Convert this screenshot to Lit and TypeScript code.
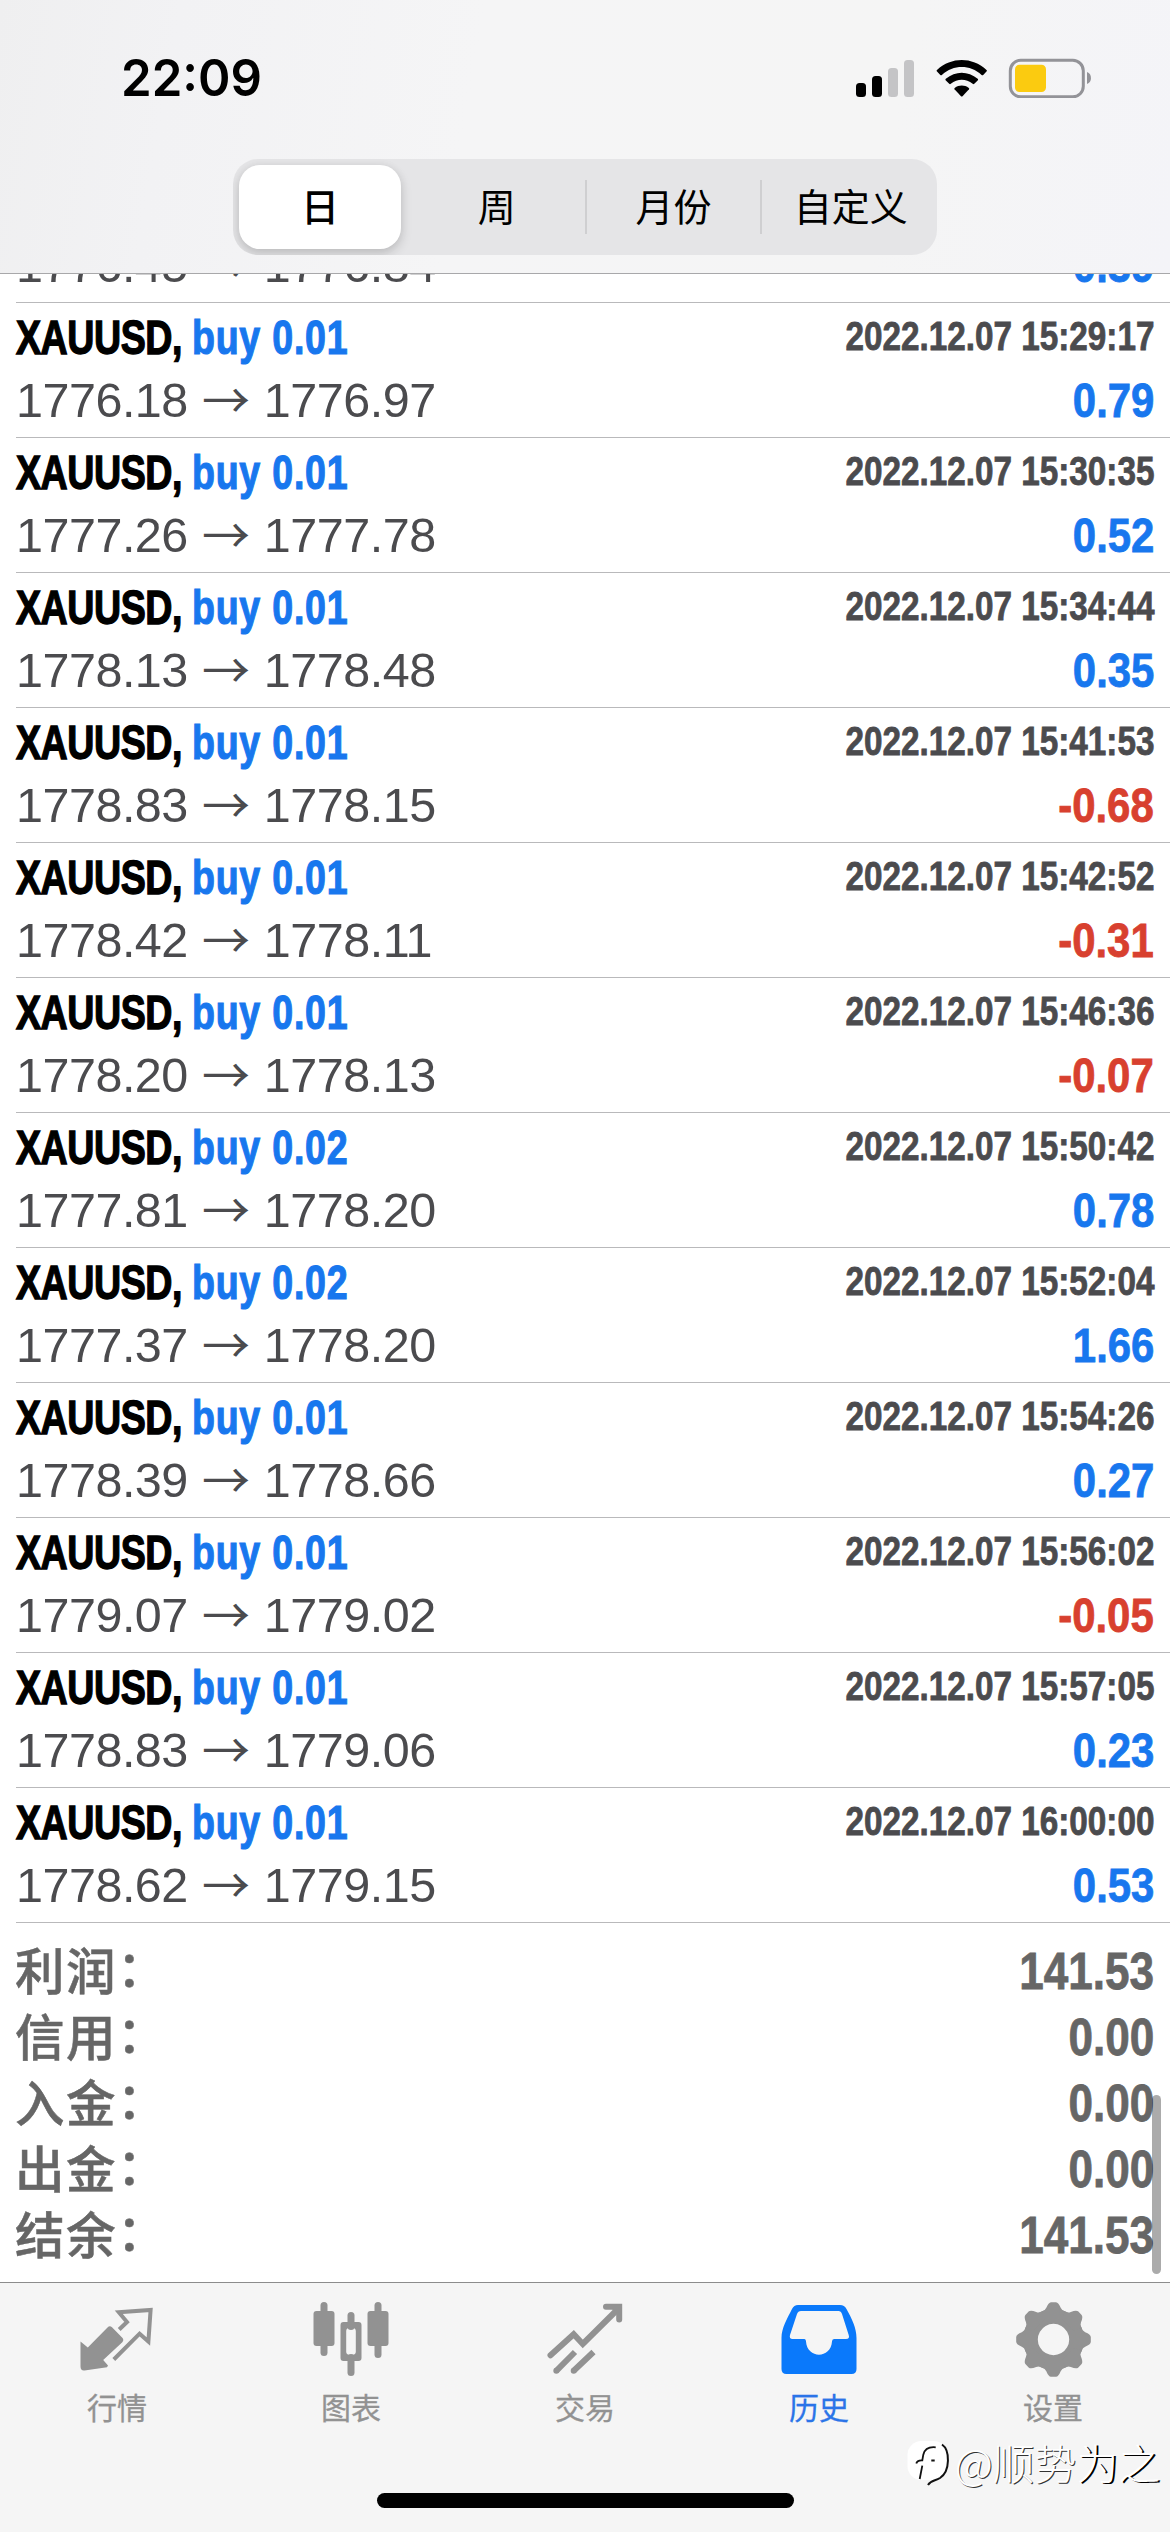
import { LitElement, html, svg, css, nothing } from "lit";
import { customElement, property } from "lit/decorators.js";

type Deal = { lot: string; open: string; close: string; time: string; profit: string };

/* The deal that is scrolled halfway under the header: only its price line is in view. */
const CLIPPED: Deal = { lot: "", open: "1776.45", close: "1776.84", time: "", profit: "0.39" };

const DEALS: Deal[] = [
  { lot: "0.01", open: "1776.18", close: "1776.97", time: "2022.12.07 15:29:17", profit: "0.79" },
  { lot: "0.01", open: "1777.26", close: "1777.78", time: "2022.12.07 15:30:35", profit: "0.52" },
  { lot: "0.01", open: "1778.13", close: "1778.48", time: "2022.12.07 15:34:44", profit: "0.35" },
  { lot: "0.01", open: "1778.83", close: "1778.15", time: "2022.12.07 15:41:53", profit: "-0.68" },
  { lot: "0.01", open: "1778.42", close: "1778.11", time: "2022.12.07 15:42:52", profit: "-0.31" },
  { lot: "0.01", open: "1778.20", close: "1778.13", time: "2022.12.07 15:46:36", profit: "-0.07" },
  { lot: "0.02", open: "1777.81", close: "1778.20", time: "2022.12.07 15:50:42", profit: "0.78" },
  { lot: "0.02", open: "1777.37", close: "1778.20", time: "2022.12.07 15:52:04", profit: "1.66" },
  { lot: "0.01", open: "1778.39", close: "1778.66", time: "2022.12.07 15:54:26", profit: "0.27" },
  { lot: "0.01", open: "1779.07", close: "1779.02", time: "2022.12.07 15:56:02", profit: "-0.05" },
  { lot: "0.01", open: "1778.83", close: "1779.06", time: "2022.12.07 15:57:05", profit: "0.23" },
  { lot: "0.01", open: "1778.62", close: "1779.15", time: "2022.12.07 16:00:00", profit: "0.53" },
];

const TOTALS: [string, string][] = [
  ["利润", "141.53"],
  ["信用", "0.00"],
  ["入金", "0.00"],
  ["出金", "0.00"],
  ["结余", "141.53"],
];

@customElement("status-bar")
class StatusBar extends LitElement {
  static styles = css`
    :host { display: flex; justify-content: space-between; align-items: center; height: 156px; padding: 0 78px 0 121px; box-sizing: border-box; }
    .clock { font: 600 51px/60px Inter, "Liberation Sans", sans-serif; color: #000; transform: scaleX(0.965); transform-origin: left; }
    .icons { display: block; width: 237px; height: 40px; }
  `;
  render() {
    return html`
      <div class="clock">22:09</div>
      <svg class="icons" viewBox="855 57 237 40">
        <rect x="856" y="82" width="10" height="14" rx="3.5" />
        <rect x="872" y="75" width="10" height="21" rx="3.5" />
        <rect x="888" y="67" width="10" height="29" rx="3.5" fill="#c4c4c6" />
        <rect x="904" y="59" width="10" height="37" rx="3.5" fill="#c4c4c6" />
        <path d="M936.8 70.3 Q936.2 69.6 937 68.9 C951.5 55.8 972 55.8 986.5 68.9 Q987.3 69.6 986.7 70.3 L983.2 73.9 Q982.4 74.6 981.6 73.9 C970 63.5 953.5 63.5 941.9 73.9 Q941.1 74.6 940.3 73.9 Z" />
        <path d="M945.6 79.2 Q945 78.5 945.8 77.8 C955.5 69.6 968 69.6 977.7 77.8 Q978.5 78.5 977.9 79.2 L974.3 82.8 Q973.5 83.5 972.7 82.8 C966 77.4 957.5 77.4 950.8 82.8 Q950 83.5 949.2 82.8 Z" />
        <path d="M954.5 88.2 Q953.9 87.5 954.7 86.9 C959 83.8 964.5 83.8 968.8 86.9 Q969.6 87.5 969 88.2 L962.5 95.2 Q961.75 96 961 95.2 Z" />
        <rect x="1010.3" y="59.300" width="73" height="36.500" rx="10.5" fill="none" stroke="#939398" stroke-width="3" />
        <path d="M1087 71 C1092.3 72.5 1092.3 81.5 1087 83 Z" fill="#939398" />
        <rect x="1015" y="63.7" width="31" height="27.4" rx="4.500" fill="#fbcb10" />
      </svg>
    `;
  }
}

@customElement("period-switch")
class PeriodSwitch extends LitElement {
  static styles = css`
    :host { display: block; width: 704px; margin: 3px auto 0; }
    .track { display: flex; height: 96px; box-sizing: border-box; border-radius: 25px; background: #e5e5e7; overflow: hidden; }
    .seg { flex: 177 0 0; display: flex; align-items: center; justify-content: center; padding-bottom: 5px; font: 400 38px/50px "Noto Sans CJK SC", sans-serif; color: #000; box-sizing: border-box; }
    .week { padding-right: 1px; }
    .custom { flex-grow: 174; padding-left: 3px; }
    .on { flex: none; width: 162px; height: 84px; margin: 6px 8px 6px 6px; border-radius: 21px; background: #fff; box-shadow: 0 5px 12px rgba(0, 0, 0, 0.16), 0 0 8px rgba(0, 0, 0, 0.05); font-weight: 500; }
    .bar { flex: none; align-self: center; width: 2px; height: 54px; margin: 0 -1px; background: #cfcfd1; }
  `;
  render() {
    return html`<div class="track">
      <div class="seg on">日</div>
      <div class="seg week">周</div>
      <div class="bar"></div>
      <div class="seg">月份</div>
      <div class="bar"></div>
      <div class="seg custom">自定义</div>
    </div>`;
  }
}

@customElement("deal-row")
class DealRow extends LitElement {
  @property({ attribute: false }) deal!: Deal;
  static styles = css`
    :host { display: block; margin-left: 16px; padding: 3px 16px 6px 0; box-sizing: border-box; border-bottom: 1px solid #b9b9bb; font-family: "Liberation Sans", Arial, sans-serif; white-space: nowrap; }
    .line { display: flex; justify-content: space-between; align-items: baseline; height: 62px; line-height: 62px; }
    .head { margin-bottom: 1px; }
    .name { font-size: 49px; font-weight: 700; color: #000; letter-spacing: -0.6px; -webkit-text-stroke: 1.4px; transform: scaleX(0.767); transform-origin: left; }
    .side { color: #1877ee; letter-spacing: 1px; -webkit-text-stroke: 1.2px; }
    .time { font-size: 40px; font-weight: 700; color: #4b4b4e; transform: translateY(-4px) scaleX(0.832); transform-origin: right; -webkit-text-stroke: 0.8px; }
    .prices { display: flex; font-size: 48.5px; letter-spacing: -0.5px; color: #4b4b4e; }
    .arrow { display: flex; width: 76px; justify-content: center; font-family: "Noto Sans CJK SC", sans-serif; font-size: 48px; transform: translateY(-3px); }
    .profit { font-size: 49px; font-weight: 700; transform: scaleX(0.855); transform-origin: right; -webkit-text-stroke: 0.8px; color: #1877ee; }
    .loss { color: #d8402f; }
    :host([clipped]) { padding-top: 0; }
  `;
  render() {
    const d = this.deal;
    return html`
      ${d.time ? html`<div class="line head"><span class="name">XAUUSD, <span class="side">buy ${d.lot}</span></span><span class="time">${d.time}</span></div>` : nothing}
      <div class="line"><span class="prices"><span>${d.open}</span><span class="arrow">→</span><span>${d.close}</span></span><span class="profit ${d.profit.startsWith("-") ? "loss" : ""}">${d.profit}</span></div>
    `;
  }
}

@customElement("totals-list")
class TotalsList extends LitElement {
  static styles = css`
    :host { display: block; padding: 15px 16px 0; }
    .row { display: flex; justify-content: space-between; align-items: flex-start; height: 66px; color: #666; }
    .label { font: 500 49.5px/61px "Noto Sans CJK SC", sans-serif; letter-spacing: 1.5px; margin-left: -1px; -webkit-text-stroke: 0.5px; }
    .value { font: 700 52px/66px "Liberation Sans", Arial, sans-serif; transform: scaleX(0.848); transform-origin: right; -webkit-text-stroke: 0.8px; }
    .colon { position: relative; top: -3px; }
  `;
  render() {
    return TOTALS.map(([k, v]) => html`<div class="row"><span class="label">${k}<span class="colon">：</span></span><span class="value">${v}</span></div>`);
  }
}

const gearTeeth = [0, 45, 90, 135, 180, 225, 270, 315];

const ICONS = {
  quotes: svg`
    <path d="M1.500 39.500 L8.800 45.500 L28.500 25.500 Q30.800 23 33 25.300 L43.300 35.800 Q45.300 38 43.300 40.300 L24.200 58 L29 63.500 L28 65.300 L5.500 68.400 Q1.500 68.800 1.500 64.500 Z" fill="#929292" />
    <path d="M40.200 27.500 L48 20 L39.800 10.300 L71.600 7.900 L69.400 39.500 L60.600 31.700 L34.800 57.500" fill="none" stroke="#929292" stroke-width="4" />`,
  chart: svg`<g fill="#929292">
    <rect x="7.500" y="0" width="7" height="54" rx="3.5" /><rect x="0.500" y="9" width="21" height="35" rx="3" />
    <rect x="34.500" y="10" width="7" height="18" rx="3.5" /><rect x="34.500" y="52" width="7" height="22" rx="3.5" />
    <path fill-rule="evenodd" d="M30.500 20 H45.500 Q48.500 20 48.500 23 V56 Q48.500 59 45.500 59 H30.500 Q27.500 59 27.500 56 V23 Q27.500 20 30.500 20 Z M38 25.500 Q33.200 25.500 33.200 29 V50 Q33.200 53 38 53 Q42.800 53 42.800 50 V29 Q42.800 25.500 38 25.500 Z" />
    <rect x="61.500" y="0" width="7" height="56" rx="3.5" /><rect x="54.500" y="9" width="21" height="35" rx="3" /></g>`,
  trade: svg`<g fill="none" stroke="#929292" stroke-width="6">
    <path d="M3.500 53.300 L26.700 32.300 L35.800 42 L70 8" stroke-linecap="round" />
    <path d="M59 4.800 H72.200 V17.500" stroke-linecap="round" />
    <path d="M28 50 L9.300 68.800 M46.500 50 L26.700 68.800" />
    </g><path d="M62 4 L73 4 L73 15 Z" fill="#929292" /><circle cx="9.300" cy="68.800" r="3" fill="#929292" /><circle cx="26.700" cy="68.800" r="3" fill="#929292" />`,
  history: svg`<path fill="#0a79fb" fill-rule="evenodd" d="M17 3 H59 Q63.500 3 65.500 7 C71 17 75.500 26 75.500 36 V67 Q75.500 72 70.500 72 H5.500 Q0.500 72 0.500 67 V36 C0.500 26 6 17 11 7 Q13 3 17 3 Z M20 9 Q17 9 16 12 L9 33 Q8 37 11.500 37 H23.500 Q25 37 25 39.500 C26 57 50 57 51 39.500 Q51 37 53 37 H65 Q69 37 67.700 33 L61 12 Q60 9 57.500 9 Z" />`,
  settings: svg`<g fill="#929292"><path fill-rule="evenodd" d="M38.500 7 A30.500 30.500 0 1 1 38.490 7 Z M38.500 21.800 A15.700 15.700 0 1 0 38.510 21.800 Z" />
    ${gearTeeth.map((a) => svg`<path transform="rotate(${a} 38.500 37.500)" d="M26.500 9.800 Q30 9 31.300 5.800 Q33.500 0.400 36 0.200 H41 Q43.500 0.400 45.700 5.800 Q47 9 50.500 9.800 L47 17 H30 Z" />`)}</g>`,
};

@customElement("tab-bar")
class TabBar extends LitElement {
  static styles = css`
    :host { display: block; position: relative; height: 250px; box-sizing: border-box; border-top: 1px solid #8c8c8c; background: #f5f5f5; }
    .tabs { display: flex; }
    .tab { flex: 1; display: flex; flex-direction: column; align-items: center; padding-top: 19px; font: 400 30px/40px "Noto Sans CJK SC", sans-serif; color: #929292; -webkit-text-stroke: 0.3px; }
    .on { color: #2b74e8; }
    .icon { display: block; width: 77px; height: 75px; margin-bottom: 9px; }
    .home { width: 417px; height: 15px; border-radius: 8px; background: #000; margin: 67px auto 0; }
    .mark { position: absolute; right: 10px; top: 149px; display: flex; align-items: center; gap: 4px; font: 300 41.8px/60px "Noto Sans CJK SC", sans-serif; color: #fff; text-shadow: 1px 0.5px 0 #333; }
    .logo { display: block; width: 44px; height: 48px; margin-top: 4px; }
    .deep { text-shadow: 2px 1px 0 #000; }
  `;
  render() {
    const tabs: [keyof typeof ICONS, string][] = [
      ["quotes", "行情"],
      ["chart", "图表"],
      ["trade", "交易"],
      ["history", "历史"],
      ["settings", "设置"],
    ];
    return html`
      <div class="tabs">
        ${tabs.map(([id, label]) => html`<div class="tab ${id === "history" ? "on" : ""}"><svg class="icon" viewBox="0 0 77 75">${ICONS[id]}</svg>${label}</div>`)}
      </div>
      <div class="home"></div>
      <div class="mark">
        <svg class="logo" viewBox="0 0 44 48">
          <rect x="0.500" y="1" width="40" height="39" rx="14" fill="#fff" />
          <path d="M35 4.500 C43 10 43.500 31 33 38 C28 41 24 40 21 45" fill="none" stroke="#111" stroke-width="2" />
          <path d="M28.700 7.300 C21 6.500 17.500 9.500 16.300 14.700 L15.300 20.300 Q10 20 9.300 23.500 M15.300 25.700 L12.700 39 M24.300 20.500 H27.700" fill="none" stroke="#111" stroke-width="1.800" />
        </svg>
        <span>@顺势<span class="deep">为之</span></span>
      </div>
    `;
  }
}

@customElement("app-root")
class AppRoot extends LitElement {
  static styles = css`
    :host { display: flex; flex-direction: column; width: 1170px; height: 2532px; overflow: hidden; background: #fff; }
    .header { flex: none; height: 274px; box-sizing: border-box; border-bottom: 1px solid #a8a8aa; background: linear-gradient(100deg, #efeff0 0%, #f2f2f4 15%, #f5f5f6 40%, #f5f5f5 75%, #f4f4f8 100%); }
    .content { position: relative; flex: 1; min-height: 0; overflow: hidden; display: flex; flex-direction: column; }
    .deals { flex: none; margin-top: -40px; }
    .thumb { position: absolute; right: 9px; bottom: 8px; width: 9px; height: 179px; border-radius: 5px; background: rgba(0, 0, 0, 0.33); }
    .tabbar { flex: none; }
  `;
  render() {
    return html`
      <div class="header"><status-bar></status-bar><period-switch></period-switch></div>
      <div class="content">
        <div class="deals">
          <deal-row clipped .deal=${CLIPPED}></deal-row>
          ${DEALS.map((d) => html`<deal-row .deal=${d}></deal-row>`)}
        </div>
        <totals-list></totals-list>
        <div class="thumb"></div>
      </div>
      <tab-bar class="tabbar"></tab-bar>
    `;
  }
}
